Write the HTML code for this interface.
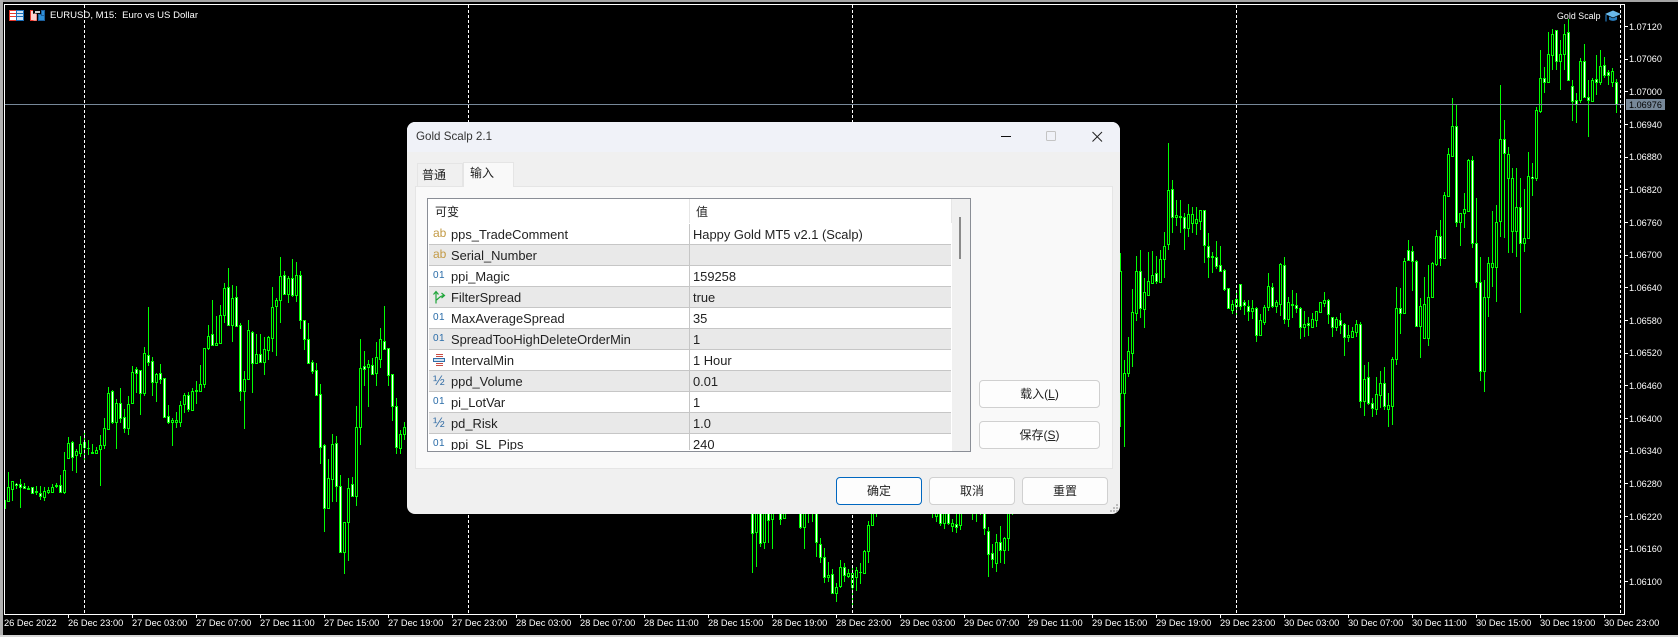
<!DOCTYPE html>
<html><head><meta charset="utf-8"><style>
html,body{margin:0;padding:0;background:#000;width:1678px;height:637px;overflow:hidden}
body{position:relative;font-family:"Liberation Sans","Noto Sans CJK SC",sans-serif}
.a{position:absolute}
.t{position:absolute;color:#fff;font-size:9.3px;line-height:12px;white-space:pre}
.p{left:1629px;font-size:9.1px}
.m{top:617px}
.k{position:absolute;top:614px;width:1px;height:4px;background:#fff}
.h{position:absolute;left:1624px;width:4px;height:1px;background:#fff}
#dlg{position:absolute;left:407px;top:122px;width:713px;height:392px;background:#f0f0f0;border-radius:8px;overflow:hidden;color:#222;font-size:12.9px}
#dlg .q{position:absolute}
.r{position:absolute;left:0;width:522px;height:21px;box-sizing:border-box;border-bottom:1px solid #c6c6c6;background:#fff;line-height:20px;color:#222}
.r.g{background:#e9e9e9}
.r .n{position:absolute;left:22px;top:1px;white-space:pre}
.r .v{position:absolute;left:264px;top:1px;white-space:pre}
.r .d{position:absolute;left:260px;top:0;width:1px;height:21px;background:#c6c6c6}
.r .i{position:absolute;left:4px;top:0;width:14px;text-align:left;white-space:pre;line-height:19px}
.ab{color:#c39a45;font-size:12px}
.o1{color:#2a6ca8;font-size:10px;letter-spacing:.4px}
.hf{color:#3a72a8;font-size:14px}
.b{position:absolute;box-sizing:border-box;background:#fdfdfd;border:1px solid #d0d0d0;border-radius:4px;text-align:center;font-size:12px;color:#222}
</style></head><body>
<svg class="a" style="left:0;top:0" width="1678" height="637" shape-rendering="crispEdges">
<rect x="5" y="500" width="1" height="9" fill="#0f0"/>
<path id="pg" fill="#0f0"/><path id="pk" fill="#000"/><path id="pw" fill="#fff"/>
<rect x="5" y="104" width="1619" height="1" fill="#778899"/>
<g stroke="#fff" stroke-dasharray="3 2" stroke-width="1">
<path d="M84.5 5V614M468.5 5V614M852.5 5V614M1236.5 5V614M1620.5 5V614"/></g>
<rect x="0" y="0" width="1678" height="2" fill="#a4a4a4"/>
<rect x="0" y="0" width="3" height="637" fill="#b0b0b0"/>
<rect x="0" y="635" width="1678" height="2" fill="#d6d6d6"/>
<rect x="4" y="4" width="1621" height="1" fill="#fff"/>
<rect x="4" y="4" width="1" height="611" fill="#fff"/>
<rect x="4" y="614" width="1621" height="1" fill="#fff"/>
<rect x="1624" y="4" width="1" height="611" fill="#fff"/>
</svg>

<!-- top-left icons -->
<svg class="a" style="left:9px;top:10px" width="15" height="11" shape-rendering="crispEdges">
<rect x="0" y="0" width="15" height="11" fill="#fff"/>
<path d="M.5 .5h7v10h-7z" fill="none" stroke="#e8392c"/><path d="M7.5 .5h7v10h-7z" fill="none" stroke="#1c6fb8"/>
<path d="M1 3.500h6M1 6.500h6" stroke="#e8392c"/><path d="M8 3.500h6M8 6.500h6" stroke="#1c6fb8"/>
<path d="M8 1h6v2h-6zM8 4h6v2h-6zM8 7h6v3h-6z" fill="#cfe6f7"/></svg>
<svg class="a" style="left:30px;top:10px" width="15" height="11" shape-rendering="crispEdges">
<rect x=".5" y=".5" width="6" height="10" fill="#fbd0cc" stroke="#e8392c"/>
<rect x="3" y="0" width="8" height="4" fill="#000"/><rect x="5" y="1" width="5" height="2" fill="#d2d2d2"/>
<rect x="3.500" y="3.500" width="3" height="7" fill="#fbd0cc" stroke="#e8392c" stroke-width="0"/>
<rect x="8.500" y="4.500" width="6" height="6" fill="#2f8fd6" stroke="#1c5f9c"/><rect x="11.500" y=".5" width="3" height="5" fill="#2f8fd6" stroke="#1c5f9c"/></svg>
<div class="t" style="left:50px;top:9.500px;font-size:9.550px">EURUSD, M15:  Euro vs US Dollar</div>
<div class="t" style="left:1557px;top:9.500px;font-size:8.800px;letter-spacing:.05px">Gold Scalp</div>
<svg class="a" style="left:1605px;top:10px" width="16" height="12"><path d="M0 4L8 .5l8 3.500-8 3.500z" fill="#69b9ec"/><path d="M4 6.500v3c2 1.800 6 1.800 8 0v-3L8 8.200z" fill="#2a7fc0"/><path d="M1 5v6.500" stroke="#1b5f95" stroke-width="1.500"/></svg>

<!-- price axis -->
<div class="h" style="top:26px"></div><div class="h" style="top:59px"></div><div class="h" style="top:91px"></div><div class="h" style="top:124px"></div><div class="h" style="top:157px"></div><div class="h" style="top:189px"></div><div class="h" style="top:222px"></div><div class="h" style="top:255px"></div><div class="h" style="top:287px"></div><div class="h" style="top:320px"></div><div class="h" style="top:353px"></div><div class="h" style="top:385px"></div><div class="h" style="top:418px"></div><div class="h" style="top:451px"></div><div class="h" style="top:483px"></div><div class="h" style="top:516px"></div><div class="h" style="top:549px"></div><div class="h" style="top:581px"></div>
<div class="t p" style="top:20.500px">1.07120</div>
<div class="t p" style="top:53px">1.07060</div>
<div class="t p" style="top:85.500px">1.07000</div>
<div class="t p" style="top:118.500px">1.06940</div>
<div class="t p" style="top:151px">1.06880</div>
<div class="t p" style="top:183.500px">1.06820</div>
<div class="t p" style="top:216.500px">1.06760</div>
<div class="t p" style="top:249px">1.06700</div>
<div class="t p" style="top:281.500px">1.06640</div>
<div class="t p" style="top:314.500px">1.06580</div>
<div class="t p" style="top:347px">1.06520</div>
<div class="t p" style="top:379.500px">1.06460</div>
<div class="t p" style="top:412.500px">1.06400</div>
<div class="t p" style="top:445px">1.06340</div>
<div class="t p" style="top:477.500px">1.06280</div>
<div class="t p" style="top:510.500px">1.06220</div>
<div class="t p" style="top:543px">1.06160</div>
<div class="t p" style="top:575.500px">1.06100</div>
<div class="a" style="left:1626px;top:99px;width:39px;height:11px;background:#778899"></div>
<div class="t p" style="top:98.500px;color:#000">1.06976</div>

<!-- time axis -->
<div class="k" style="left:68px"></div><div class="k" style="left:132px"></div><div class="k" style="left:196px"></div><div class="k" style="left:260px"></div><div class="k" style="left:324px"></div><div class="k" style="left:388px"></div><div class="k" style="left:452px"></div><div class="k" style="left:516px"></div><div class="k" style="left:580px"></div><div class="k" style="left:644px"></div><div class="k" style="left:708px"></div><div class="k" style="left:772px"></div><div class="k" style="left:836px"></div><div class="k" style="left:900px"></div><div class="k" style="left:964px"></div><div class="k" style="left:1028px"></div><div class="k" style="left:1092px"></div><div class="k" style="left:1156px"></div><div class="k" style="left:1220px"></div><div class="k" style="left:1284px"></div><div class="k" style="left:1348px"></div><div class="k" style="left:1412px"></div><div class="k" style="left:1476px"></div><div class="k" style="left:1540px"></div><div class="k" style="left:1604px"></div>
<div class="t m" style="left:4px">26 Dec 2022</div>
<div class="t m" style="left:68px">26 Dec 23:00</div>
<div class="t m" style="left:132px">27 Dec 03:00</div>
<div class="t m" style="left:196px">27 Dec 07:00</div>
<div class="t m" style="left:260px">27 Dec 11:00</div>
<div class="t m" style="left:324px">27 Dec 15:00</div>
<div class="t m" style="left:388px">27 Dec 19:00</div>
<div class="t m" style="left:452px">27 Dec 23:00</div>
<div class="t m" style="left:516px">28 Dec 03:00</div>
<div class="t m" style="left:580px">28 Dec 07:00</div>
<div class="t m" style="left:644px">28 Dec 11:00</div>
<div class="t m" style="left:708px">28 Dec 15:00</div>
<div class="t m" style="left:772px">28 Dec 19:00</div>
<div class="t m" style="left:836px">28 Dec 23:00</div>
<div class="t m" style="left:900px">29 Dec 03:00</div>
<div class="t m" style="left:964px">29 Dec 07:00</div>
<div class="t m" style="left:1028px">29 Dec 11:00</div>
<div class="t m" style="left:1092px">29 Dec 15:00</div>
<div class="t m" style="left:1156px">29 Dec 19:00</div>
<div class="t m" style="left:1220px">29 Dec 23:00</div>
<div class="t m" style="left:1284px">30 Dec 03:00</div>
<div class="t m" style="left:1348px">30 Dec 07:00</div>
<div class="t m" style="left:1412px">30 Dec 11:00</div>
<div class="t m" style="left:1476px">30 Dec 15:00</div>
<div class="t m" style="left:1540px">30 Dec 19:00</div>
<div class="t m" style="left:1604px">30 Dec 23:00</div>

<!-- dialog -->
<div id="dlg">
  <div class="q" style="left:0;top:0;width:713px;height:30px;background:#f0f2f8"></div>
  <div class="q" style="left:9px;top:7px;font-size:11.600px;line-height:16px;color:#333">Gold Scalp 2.1</div>
  <svg class="q" style="left:590px;top:6px" width="120" height="18">
    <path d="M4 8.500h10" stroke="#111" stroke-width="1"/>
    <rect x="49.500" y="3.500" width="9" height="9" rx="1" fill="none" stroke="#c4c4c4"/>
    <path d="M95.500 4l9.500 9.500M105 4l-9.500 9.500" stroke="#222" stroke-width="1"/>
  </svg>
  <!-- tabs -->
  <div class="q" style="left:10px;top:41px;width:46px;height:23px;box-sizing:border-box;background:#f0f0f0;border:1px solid #e5e5e5;border-bottom:0;padding-left:4px;line-height:22px;font-size:12px">普通</div>
  <div class="q" style="left:8px;top:64px;width:698px;height:283px;box-sizing:border-box;background:#f9f9f9;border:1px solid #e5e5e5"></div>
  <div class="q" style="left:56px;top:40px;width:51px;height:25px;box-sizing:border-box;background:#f9f9f9;border:1px solid #e5e5e5;border-bottom:0;padding-left:6px;line-height:20px;font-size:12px">输入</div>
  <!-- list box -->
  <div class="q" style="left:20px;top:76px;width:544px;height:254px;box-sizing:border-box;background:#fff;border:1px solid #8a8e96"></div>
  <div class="q" style="left:282px;top:77px;width:1px;height:24px;background:#e6e6e6"></div>
  <div class="q" style="left:544px;top:77px;width:1px;height:24px;background:#e6e6e6"></div>
  <div class="q" style="left:28px;top:81px;font-size:12px;line-height:18px">可变</div>
  <div class="q" style="left:289px;top:81px;font-size:12px;line-height:18px">值</div>
  <div class="q" style="left:545px;top:77px;width:18px;height:252px;background:#f0f0f0"></div>
  <div class="q" style="left:552px;top:95px;width:2px;height:42px;background:#8a8a8a"></div>
  <div class="q" style="left:22px;top:102px;width:522px;height:226px;overflow:hidden">
    <div class="r" style="top:0"><span class="i ab">ab</span><span class="n">pps_TradeComment</span><span class="d"></span><span class="v">Happy Gold MT5 v2.1 (Scalp)</span></div>
    <div class="r g" style="top:21px"><span class="i ab">ab</span><span class="n">Serial_Number</span><span class="d"></span><span class="v"></span></div>
    <div class="r" style="top:42px"><span class="i o1">01</span><span class="n">ppi_Magic</span><span class="d"></span><span class="v">159258</span></div>
    <div class="r g" style="top:63px"><svg class="i" style="left:3px;top:3px;width:14px;height:14px" viewBox="0 0 14 14"><path d="M4 13.500V2M1.500 4.500L4 1.500 6.500 4.500M4 10C6 10 7 5.500 12.500 5.500M9.500 3L12.500 5.500 9.500 8" fill="none" stroke="#1fa53a" stroke-width="1.200"/></svg><span class="n">FilterSpread</span><span class="d"></span><span class="v">true</span></div>
    <div class="r" style="top:84px"><span class="i o1">01</span><span class="n">MaxAverageSpread</span><span class="d"></span><span class="v">35</span></div>
    <div class="r g" style="top:105px"><span class="i o1">01</span><span class="n">SpreadTooHighDeleteOrderMin</span><span class="d"></span><span class="v">1</span></div>
    <div class="r" style="top:126px"><svg class="i" style="left:4px;top:4px;width:12px;height:12px" viewBox="0 0 12 12" shape-rendering="crispEdges"><path d="M3 .500h7M3 2.500h7M3 9.500h7M3 11.500h7" stroke="#c64b45"/><rect x=".5" y="4.500" width="11" height="3" fill="#cfe2f3" stroke="#2f6ea8"/></svg><span class="n">IntervalMin</span><span class="d"></span><span class="v">1 Hour</span></div>
    <div class="r g" style="top:147px"><span class="i hf">½</span><span class="n">ppd_Volume</span><span class="d"></span><span class="v">0.01</span></div>
    <div class="r" style="top:168px"><span class="i o1">01</span><span class="n">pi_LotVar</span><span class="d"></span><span class="v">1</span></div>
    <div class="r g" style="top:189px"><span class="i hf">½</span><span class="n">pd_Risk</span><span class="d"></span><span class="v">1.0</span></div>
    <div class="r" style="top:210px"><span class="i o1">01</span><span class="n">ppi_SL_Pips</span><span class="d"></span><span class="v">240</span></div>
  </div>
  <!-- buttons -->
  <div class="b" style="left:572px;top:258px;width:121px;height:28px;line-height:26px">载入(<u>L</u>)</div>
  <div class="b" style="left:572px;top:299px;width:121px;height:28px;line-height:26px">保存(<u>S</u>)</div>
  <div class="b" style="left:429px;top:355px;width:86px;height:28px;line-height:26px;border-color:#0067c0">确定</div>
  <div class="b" style="left:522px;top:355px;width:86px;height:28px;line-height:26px">取消</div>
  <div class="b" style="left:615px;top:355px;width:86px;height:28px;line-height:26px">重置</div>
  <svg class="q" style="left:702px;top:381px" width="11" height="11" shape-rendering="crispEdges"><path d="M7 1h2v2H7zM4 4h2v2H4zM7 4h2v2H7zM1 7h2v2H1zM4 7h2v2H4zM7 7h2v2H7z" fill="#bdbdbd"/></svg>
</div>

<script>
var g='',k='',w='';
function D(x0,off,s){s.forEach(function(c,i){
 if(!c||c.length<4||(c[0]==0&&c[3]==0))return;
 var x=x0+4*i,f=function(v){return Math.round(off+v/3)};
 var h=f(c[0]),t=f(c[1]),b=f(c[2]),l=f(c[3]);
 g+='M'+x+' '+h+'h1v'+Math.max(l-h,1)+'h-1z';
 var bh=Math.max(b-t+1,1);
 g+='M'+(x-1)+' '+t+'h3v'+bh+'h-3z';
 if(bh>2){ var s2='M'+x+' '+(t+1)+'h1v'+(bh-2)+'h-1z'; if(c[4])w+=s2; else k+=s2; }
 else if(c[4]){ w+='M'+x+' '+t+'h1v1h-1z'; }
});}
D(8,240,[[697,742,782,782],[722,722,748,782],[730,731,735,746,1],[717,733,740,803,1],[730,739,743,743,1],[738,744,748,748],[740,742,760,762,1],[738,754,757,764],[738,760,767,780,1],[740,752,770,782],[742,751,755,762],[732,742,756,758],[730,735,738,745],[705,736,755,755,1],[636,691,755,762],[591,610,654,656],[604,607,652,693,1],[628,634,645,698],[588,612,640,650],[570,607,620,665,1],[600,624,625,645],[612,637,640,642],[622,631,638,640],[586,616,626,738],[534,565,614,627],[441,460,566,566],[450,452,545,552,1],[478,490,545,627],[444,490,535,548,1],[507,532,563,578,1],[468,493,563,585],[378,397,490,492],[380,388,398,458,1],[390,391,458,525,1],[321,340,458,467],[201,344,367,378,1],[351,364,425,468,1],[400,403,425,486],[372,400,418,432,1],[415,415,530,530,1],[495,527,545,552,1],[535,541,545,618],[516,541,545,564],[484,496,545,561],[459,466,491,519],[455,466,507,516,1],[445,454,510,512],[423,451,452,492],[376,432,452,455],[323,325,432,443],[255,287,323,330],[180,281,314,318,1],[228,310,314,318],[196,226,308,308],[129,145,224,250],[84,142,255,257,1],[135,175,255,306],[138,172,257,258,1],[250,256,452,483,1],[393,418,452,567],[240,271,418,420],[274,277,368,458,1],[282,343,368,372],[282,343,365,370,1],[290,328,365,405],[287,292,331,360],[141,202,293,335],[173,181,197,348],[52,109,181,249],[94,106,161,163,1],[107,114,161,188],[57,115,164,170,1],[67,106,164,186],[94,106,241,267,1],[240,241,296,330,1],[249,298,368,370,1],[360,367,392,402,1],[370,391,464,464,1],[432,463,620,672,1],[613,616,803,876,1],[657,715,803,803],[582,613,716,785],[588,610,739,785,1],[706,739,935,935,1],[845,845,935,1001],[714,745,845,962],[712,733,767,767,1],[498,562,767,798],[297,385,560,615],[334,379,386,438,1],[360,373,380,500],[353,376,402,402,1],[306,352,398,438],[265,298,358,384],[198,304,326,326,1],[323,325,404,438,1],[402,403,497,543,1],[475,497,622,641,1],[570,583,623,642],[545,562,583,600]]);
D(752,510,[[0,0,70,190,1],[0,0,66,170],[0,0,100,112,1],[0,0,96,116],[0,0,30,100,1],[0,0,28,116],[0,0,0,12],[0,0,28,46,1],[0,0,25,25],,,,[0,0,52,56,1],[0,0,52,116],[0,0,0,38],[0,0,0,36],[0,0,97,140,1],[84,103,142,158,1],[114,142,200,218,1],[156,194,200,216],[178,193,248,250,1],[220,230,248,275],[150,172,228,235],[160,172,196,215,1],[178,190,197,203],[170,190,230,285],[172,181,200,242],[160,185,187,221],[120,124,188,190],[34,46,124,158],[0,0,44,46],[0,0,0,20]]);
D(932,510,[[0,0,0,23],[0,0,18,35],[0,0,38,48,1],[0,0,38,56],[0,0,40,46,1],[27,40,47,65],[12,43,50,68,1],[0,0,44,60],,,[0,0,0,30],[0,0,0,36],[0,0,0,14],[0,0,55,75,1],[52,62,131,200,1],[102,128,146,175,1],[72,95,158,186],[48,97,119,158,1],[80,85,119,161],[0,0,85,122],[0,0,0,14]]);
D(1120,240,[[40,92,458,560],[360,400,458,620],[292,334,398,410],[148,217,338,380],[48,94,218,242],[30,92,205,235,1],[115,157,208,263],[37,124,164,164],[33,106,128,128],[48,100,122,132,1],[30,58,125,128],[-24,18,56,113],[-290,-150,13,30],[-180,-152,-68,-20,1],[-120,-75,-70,-43],[-120,-73,-68,-20],[-80,-70,-37,30,1],[-108,-78,-35,-10],[-100,-78,-52,-20],[-100,-62,-52,-15],[-90,-90,-58,-30],[-90,-90,16,68,1],[-20,19,52,113,1],[37,49,52,98],[3,50,78,88,1],[18,76,92,96,1],[88,90,146,152,1],[143,145,205,205,1],[180,193,210,223],[152,178,197,235],[133,133,198,210,1],[180,187,196,224,1],[180,199,212,243,1],[180,205,212,237],[200,205,286,305,1],[222,241,284,284],[195,202,245,255],[99,139,200,212],[130,142,197,205,1],[180,186,197,220],[70,72,193,228],[52,76,238,252,1],[170,187,236,260],[150,193,195,233],[159,194,203,218,1],[202,203,260,296,1],[213,253,260,292],[232,250,256,288,1],[220,237,260,260],[212,212,239,260],[187,187,217,220],[157,181,188,200],[178,181,223,252,1],[230,232,260,291,1],[230,237,260,272],[220,239,254,282,1],[250,253,292,347,1],[256,286,290,305],[262,274,290,292],[240,252,275,290],[246,253,482,503,1],[375,418,482,527],[366,412,490,495,1],[474,490,503,531,1],[410,463,506,525],[393,430,464,505],[381,428,499,510,1],[460,496,506,560],[352,358,497,555],[141,203,358,375],[144,205,218,282,1],[55,64,218,218],[0,31,60,62,1],[18,34,64,152,1],[60,64,258,262,1]]);
D(1420,60,[[715,737,797,893],[650,733,835,835],[615,712,833,857],[605,608,710,713],[510,528,612,617],[480,528,593,618,1],[395,405,593,593],[265,283,407,407],[113,198,287,287],[135,198,485,502,1],[460,460,485,558],[400,447,460,505],[297,300,453,455],[288,300,550,565,1],[415,550,665,683,1],[590,665,932,962,1],[660,712,932,995],[590,610,712,770],[453,610,622,680],[435,485,620,725],[75,238,484,530],[180,238,280,533,1],[262,283,353,580],[325,355,513,580],[323,440,512,590],[355,440,548,760,1],[388,533,548,575],[277,347,533,533],[310,350,355,407,1],[140,150,355,362]]);
D(1540,0,[[150,235,332,338],[200,235,245,278,1],[97,163,246,250],[87,103,165,210],[90,91,182,210,1],[120,163,182,270],[72,103,163,210],[57,97,239,240,1],[240,259,304,363,1],[280,301,311,368,1],[175,183,301,310],[132,183,290,292,1],[240,292,301,412,1],[235,240,302,302],[165,238,247,285,1],[150,198,245,255],[170,196,226,235,1],[210,216,226,255,1],[205,214,245,262],[237,247,312,338,1]]);
document.getElementById('pg').setAttribute('d',g);
document.getElementById('pk').setAttribute('d',k);
document.getElementById('pw').setAttribute('d',w);
</script>
</body></html>
